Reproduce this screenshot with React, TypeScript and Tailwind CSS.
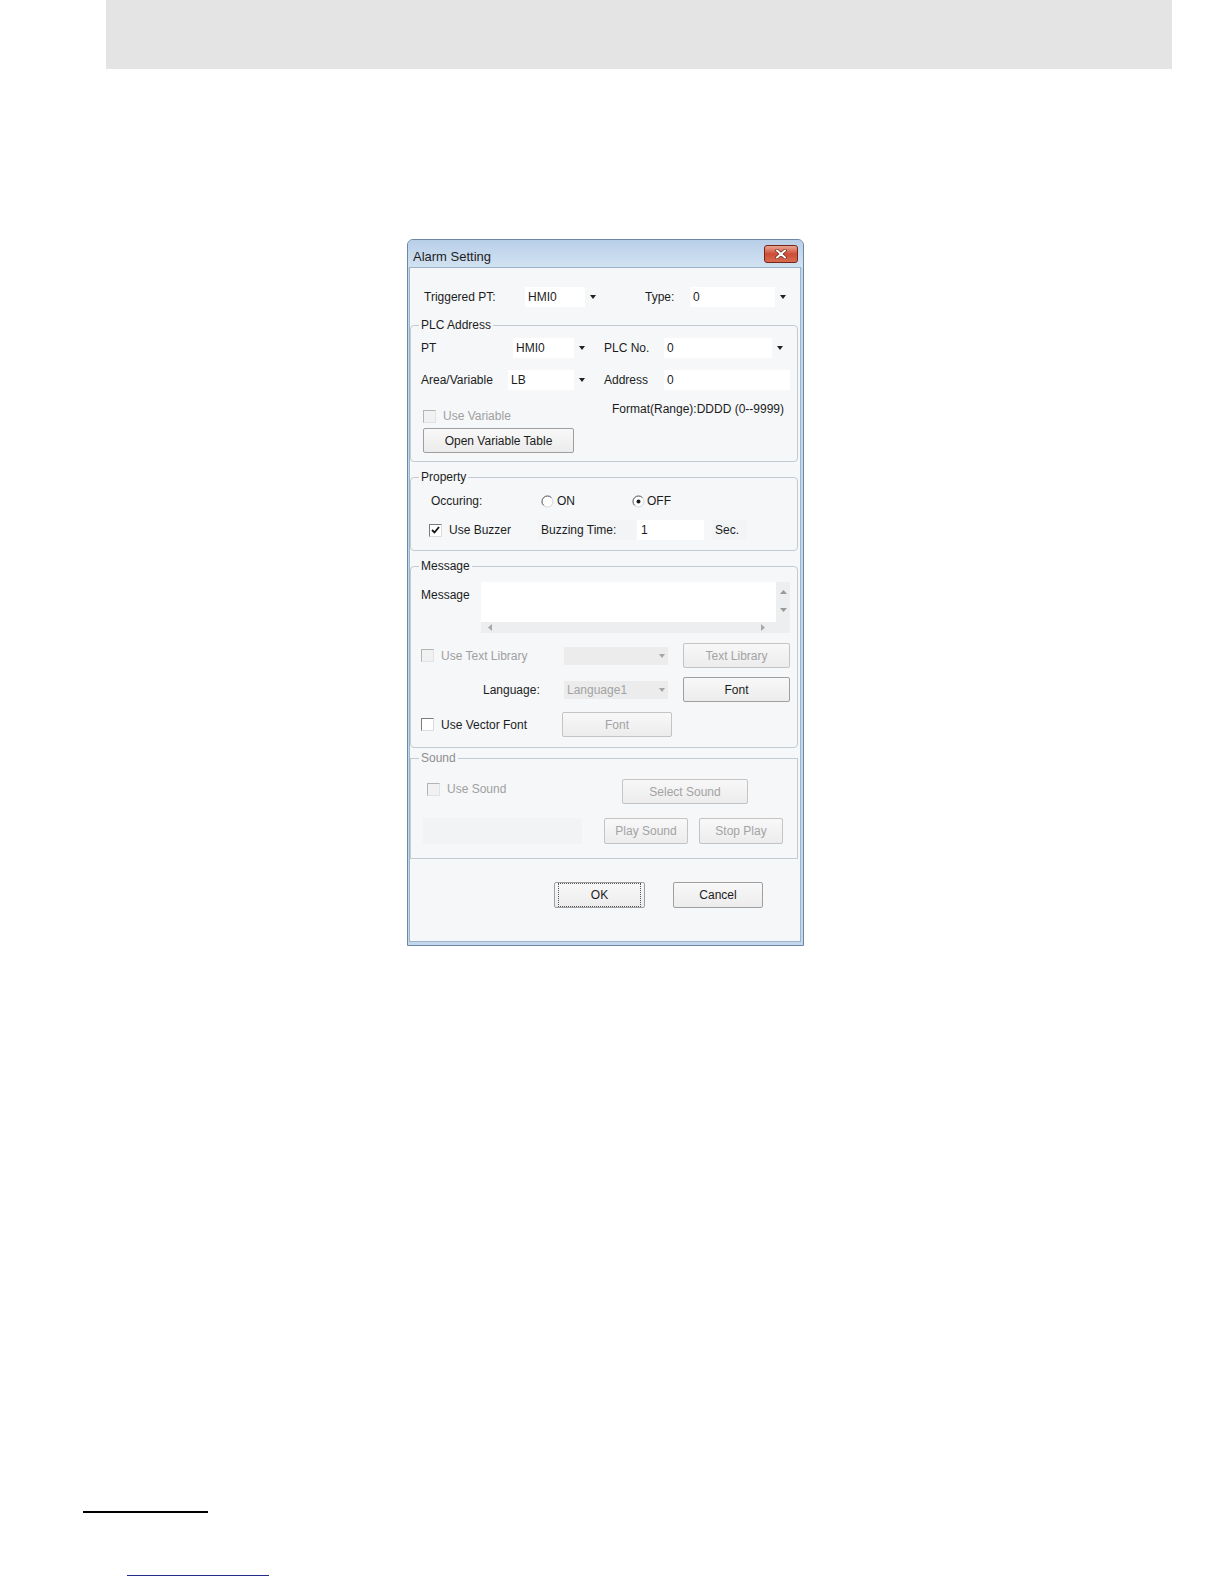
import type { ReactNode } from 'react'

function DownArrow({ dim = false }: { dim?: boolean }) {
  return (
    <svg width="6" height="4" viewBox="0 0 6 4">
      <path d="M0 0h6L3 4z" fill={dim ? '#a5a5a5' : '#222222'} />
    </svg>
  )
}

function Combo({ text, box }: { text: string; box: string }) {
  return (
    <div className="flex h-[20px]">
      <div className={`${box} h-full bg-white pl-[3px] flex items-center`}>{text}</div>
      <div className="w-[16px] h-full flex items-center justify-center">
        <DownArrow />
      </div>
    </div>
  )
}

function DimCombo({ text = '' }: { text?: string }) {
  return (
    <div className="w-[104px] h-[18px] bg-[#ececec] flex items-center justify-between pl-[3px] pr-[3px] text-[#a3a3a3]">
      <span>{text}</span>
      <DownArrow dim />
    </div>
  )
}

function Check({ checked = false, dim = false }: { checked?: boolean; dim?: boolean }) {
  return (
    <span
      className={`w-[13px] h-[13px] shrink-0 flex items-center justify-center border ${
        dim
          ? 'border-t-[#b4b4b4] border-l-[#b4b4b4] border-r-[#e2e2e2] border-b-[#e2e2e2] bg-[#f1f1f1]'
          : 'border-t-[#7c7c7c] border-l-[#7c7c7c] border-r-[#dcdcdc] border-b-[#dcdcdc] bg-white'
      }`}
    >
      {checked && (
        <svg width="9" height="8" viewBox="0 0 9 8">
          <path d="M1 4l2.5 2.5L8 1" stroke="#111" strokeWidth="1.8" fill="none" />
        </svg>
      )}
    </span>
  )
}

function Radio({ on = false }: { on?: boolean }) {
  return (
    <svg width="13" height="13" viewBox="0 0 13 13" className="shrink-0">
      <circle cx="6.5" cy="6.5" r="5.5" fill="#ffffff" stroke="#d4d4d4" />
      <path d="M2.6 10.4A5.5 5.5 0 0 1 10.4 2.6" stroke="#5e5e5e" fill="none" />
      {on && <circle cx="6.5" cy="6.5" r="2" fill="#1c1c1c" />}
    </svg>
  )
}

function Btn({ children, className, dim = false, focus = false }: { children: ReactNode; className: string; dim?: boolean; focus?: boolean }) {
  return (
    <div
      className={`${className} shrink-0 flex items-center justify-center rounded-[2px] border bg-linear-to-b from-[#f8f8f8] to-[#ececec] ${
        dim ? 'border-[#c4c4c4] text-[#a3a3a3]' : 'border-[#9f9f9f] text-[#1c1c1c]'
      }`}
    >
      {focus ? (
        <div className="w-full h-full m-[3px] border border-dotted border-[#555] flex items-center justify-center">{children}</div>
      ) : (
        children
      )}
    </div>
  )
}

function Group({ label, className, children, dim = false }: { label: string; className: string; children: ReactNode; dim?: boolean }) {
  return (
    <div className={`relative border border-[#c2cbd3] ${className}`}>
      <span className={`absolute left-[8px] top-[-8px] px-[2px] bg-[#f5f7f9] leading-[14px] ${dim ? 'text-[#8e8e8e]' : ''}`}>{label}</span>
      {children}
    </div>
  )
}

function Dialog() {
  return (
    <div className="mt-[170px] ml-[407px] w-[397px] h-[707px] flex flex-col rounded-t-[6px] border border-[#6a88a5] bg-[#c4d8ec]">
      <div className="h-[27px] shrink-0 flex items-start justify-between pl-[5px] pr-[5px] rounded-t-[5px] bg-linear-to-b from-[#b8cfe8] to-[#d2e2f2]">
        <span className="mt-[9px] text-[13px] leading-[15px] text-[#1e1e1e]">Alarm Setting</span>
        <div className="mt-[5px] w-[34px] h-[18px] rounded-[3px] border border-[#772619] bg-linear-to-b from-[#e7a595] via-[#cd4b36] to-[#d66c52] flex items-center justify-center">
          <svg width="12" height="10" viewBox="0 0 12 10">
            <path d="M2 1.5l8 7M10 1.5l-8 7" stroke="#6b2a20" strokeWidth="3.4" strokeLinecap="round" />
            <path d="M2 1.5l8 7M10 1.5l-8 7" stroke="#ffffff" strokeWidth="2" strokeLinecap="round" />
          </svg>
        </div>
      </div>

      <div className="flex-1 ml-[1px] mr-[2px] mb-[3px] border border-[#9db3c9] bg-[#f5f7f9] flex flex-col">
        {/* Triggered PT */}
        <div className="mt-[19px] pl-[14px] h-[20px] flex items-center">
          <span className="w-[101px]">Triggered PT:</span>
          <Combo text="HMI0" box="w-[60px]" />
          <span className="ml-[44px] w-[45px]">Type:</span>
          <Combo text="0" box="w-[85px]" />
        </div>

        {/* PLC Address */}
        <Group label="PLC Address" className="mt-[18px] w-[388px] h-[137px] rounded-[4px]">
          <div className="mt-[12px] pl-[10px] flex items-center">
            <span className="w-[92px]">PT</span>
            <Combo text="HMI0" box="w-[61px]" />
            <span className="ml-[14px] w-[60px]">PLC No.</span>
            <Combo text="0" box="w-[108px]" />
          </div>
          <div className="mt-[12px] pl-[10px] flex items-center">
            <span className="w-[87px]">Area/Variable</span>
            <Combo text="LB" box="w-[66px]" />
            <span className="ml-[14px] w-[60px]">Address</span>
            <div className="w-[126px] h-[20px] bg-white pl-[3px] flex items-center">0</div>
          </div>
          <div className="mt-[12px] pl-[12px] flex items-start">
            <div className="w-[189px] mt-[7px] flex items-center text-[#a0a0a0]">
              <Check dim />
              <span className="ml-[7px]">Use Variable</span>
            </div>
            <span>Format(Range):DDDD (0--9999)</span>
          </div>
          <div className="mt-[5px] ml-[12px]">
            <Btn className="w-[151px] h-[25px]">Open Variable Table</Btn>
          </div>
        </Group>

        {/* Property */}
        <Group label="Property" className="mt-[15px] w-[388px] h-[74px] rounded-[4px]">
          <div className="mt-[16px] pl-[20px] h-[14px] flex items-center">
            <span className="w-[110px]">Occuring:</span>
            <div className="w-[91px] flex items-center">
              <Radio />
              <span className="ml-[3px]">ON</span>
            </div>
            <div className="flex items-center">
              <Radio on />
              <span className="ml-[2px]">OFF</span>
            </div>
          </div>
          <div className="mt-[12px] pl-[18px] h-[20px] flex items-center">
            <div className="w-[109px] flex items-center">
              <Check checked />
              <span className="ml-[7px]">Use Buzzer</span>
            </div>
            <span className="w-[98px] h-[20px] pl-[3px] flex items-center bg-[#f2f4f6]">Buzzing Time:</span>
            <div className="ml-[1px] w-[67px] h-[20px] bg-white pl-[4px] flex items-center">1</div>
            <span className="ml-[8px] w-[35px] h-[20px] pl-[3px] flex items-center bg-[#f2f4f6]">Sec.</span>
          </div>
        </Group>

        {/* Message */}
        <Group label="Message" className="mt-[15px] w-[388px] h-[182px] rounded-[4px]">
          <div className="mt-[15px] pl-[10px] flex items-start">
            <span className="w-[60px] mt-[6px]">Message</span>
            <div className="w-[309px] h-[51px] flex flex-col">
              <div className="flex h-[40px]">
                <div className="w-[295px] bg-white" />
                <div className="w-[14px] bg-[#eceef0] flex flex-col items-center pt-[8px] gap-[14px]">
                  <svg width="7" height="4" viewBox="0 0 7 4">
                    <path d="M0 4h7L3.5 0z" fill="#999999" />
                  </svg>
                  <svg width="7" height="4" viewBox="0 0 7 4">
                    <path d="M0 0h7L3.5 4z" fill="#999999" />
                  </svg>
                </div>
              </div>
              <div className="flex h-[11px]">
                <div className="w-[295px] bg-[#eceef0] flex items-center justify-between pl-[7px] pr-[11px]">
                  <svg width="4" height="7" viewBox="0 0 4 7">
                    <path d="M4 0v7L0 3.5z" fill="#a8a8a8" />
                  </svg>
                  <svg width="4" height="7" viewBox="0 0 4 7">
                    <path d="M0 0v7l4-3.5z" fill="#a8a8a8" />
                  </svg>
                </div>
                <div className="w-[14px] bg-[#eceef0]" />
              </div>
            </div>
          </div>
          <div className="mt-[10px] pl-[10px] h-[25px] flex items-center">
            <div className="w-[143px] flex items-center text-[#a0a0a0]">
              <Check dim />
              <span className="ml-[7px]">Use Text Library</span>
            </div>
            <DimCombo />
            <Btn className="ml-[15px] w-[107px] h-[25px]" dim>
              Text Library
            </Btn>
          </div>
          <div className="mt-[9px] pl-[10px] h-[25px] flex items-center">
            <span className="w-[143px] pl-[62px]">Language:</span>
            <DimCombo text="Language1" />
            <Btn className="ml-[15px] w-[107px] h-[25px]">Font</Btn>
          </div>
          <div className="mt-[10px] pl-[10px] h-[25px] flex items-center">
            <div className="w-[141px] flex items-center">
              <Check />
              <span className="ml-[7px]">Use Vector Font</span>
            </div>
            <Btn className="w-[110px] h-[25px]" dim>
              Font
            </Btn>
          </div>
        </Group>

        {/* Sound */}
        <Group label="Sound" className="mt-[10px] w-[388px] h-[101px]" dim>
          <div className="mt-[20px] pl-[16px] flex items-start">
            <div className="w-[195px] mt-[3px] flex items-center text-[#a0a0a0]">
              <Check dim />
              <span className="ml-[7px]">Use Sound</span>
            </div>
            <Btn className="w-[126px] h-[25px]" dim>
              Select Sound
            </Btn>
          </div>
          <div className="mt-[14px] pl-[12px] flex items-center">
            <div className="w-[159px] h-[26px] bg-[#f1f3f5]" />
            <Btn className="ml-[22px] w-[84px] h-[26px]" dim>
              Play Sound
            </Btn>
            <Btn className="ml-[11px] w-[84px] h-[26px]" dim>
              Stop Play
            </Btn>
          </div>
        </Group>

        <div className="mt-[23px] pl-[144px] flex">
          <Btn className="w-[91px] h-[26px]" focus>
            OK
          </Btn>
          <Btn className="ml-[28px] w-[90px] h-[26px]">Cancel</Btn>
        </div>
      </div>
    </div>
  )
}

export default function App() {
  return (
    <div className="w-[1224px] min-h-[1584px] bg-white font-['Liberation_Sans',Arial,sans-serif] text-[12px] leading-[14px] text-[#1c1c1c]">
      <div className="ml-[106px] w-[1066px] h-[69px] bg-[#e4e4e4]" />
      <Dialog />
      <div className="mt-[565px] ml-[83px] w-[125px] h-[2px] bg-black" />
      <div className="mt-[62px] ml-[127px] w-[142px] h-[1px] bg-[#232c86]" />
    </div>
  )
}
